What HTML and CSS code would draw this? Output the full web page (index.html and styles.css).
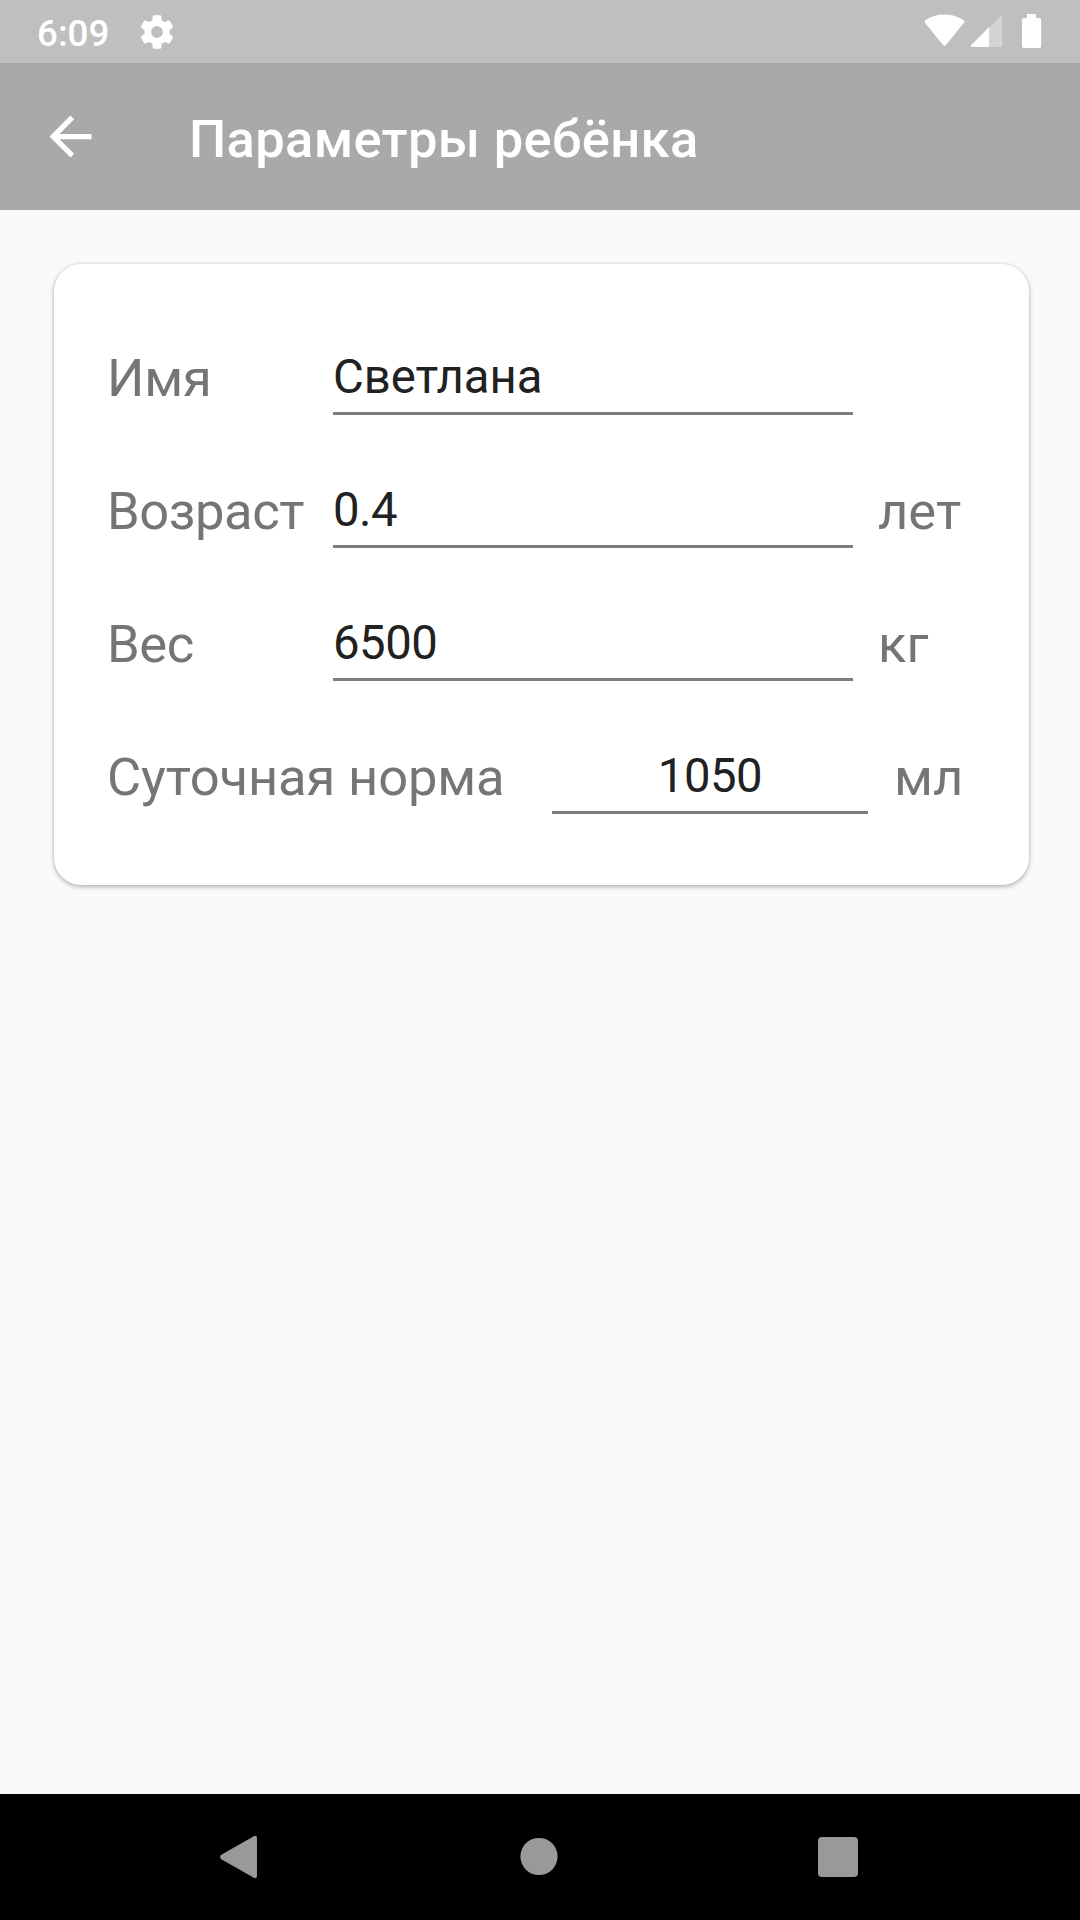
FILE: index.html
```html
<!DOCTYPE html>
<html lang="ru">
<head>
<meta charset="utf-8">
<title>Параметры ребёнка</title>
<link rel="stylesheet" href="styles.css">
</head>
<body>
<div class="screen">
  <div class="status-bar">
    <span class="clock">6:09</span>
    <svg class="gear" viewBox="0 0 24 24"><path d="M19.430 12.980c.04-.32.07-.64.07-.98s-.03-.66-.07-.98l2.110-1.650c.19-.15.24-.42.12-.64l-2-3.460c-.12-.22-.39-.3-.61-.22l-2.490 1c-.52-.4-1.080-.73-1.690-.98l-.38-2.650C14.460 2.180 14.250 2 14 2h-4c-.25 0-.46.18-.49.42l-.38 2.650c-.61.25-1.170.59-1.690.98l-2.490-1c-.23-.09-.49 0-.61.22l-2 3.460c-.13.22-.07.49.12.64l2.110 1.650c-.04.32-.07.65-.07.98s.03.66.07.98l-2.110 1.650c-.19.15-.24.42-.12.64l2 3.460c.12.22.39.3.61.22l2.490-1c.52.4 1.080.73 1.690.98l.38 2.650c.03.24.24.42.49.42h4c.25 0 .46-.18.49-.42l.38-2.650c.61-.25 1.170-.59 1.690-.98l2.490 1c.23.09.49 0 .61-.22l2-3.460c.12-.22.07-.49-.12-.64l-2.110-1.650zM12 15.500c-1.930 0-3.500-1.570-3.500-3.500s1.570-3.500 3.500-3.500 3.500 1.570 3.500 3.500-1.570 3.500-3.500 3.500z"/></svg>
    <svg class="system" viewBox="0 0 120 36">
      <path d="M1.200 9Q-.3 7.600 1.300 6.300Q9.500 0.500 20.500 0.500T39.700 6.300Q41.300 7.600 39.800 9L22.200 30.800Q20.500 32.800 18.800 30.800Z"/>
      <path class="faint" d="M65 13.500L75.800 3Q78.200 1.200 78.200 4V31Q78.200 33 76.200 33H65Z"/>
      <path d="M65 13.300V33H49Q45.500 33 47.600 30.700Z"/>
      <path d="M103 0h9v4h3.500q1.700 0 1.700 1.700V32.200q0 1.800-1.700 1.800H99.700q-1.700 0-1.700-1.800V5.700Q98 4 99.700 4H103Z"/>
    </svg>
  </div>
  <header class="app-bar">
    <svg class="back" viewBox="0 0 24 24"><path d="M20 11H7.830l5.590-5.590L12 4l-8 8 8 8 1.410-1.410L7.830 13H20v-2z"/></svg>
    <h1 class="title">Параметры ребёнка</h1>
  </header>
  <main class="content">
    <section class="card">
      <div class="row">
        <span class="label">Имя</span>
        <span class="field">Светлана</span>
      </div>
      <div class="row">
        <span class="label tight">Возраст</span>
        <span class="field number">0.4</span>
        <span class="unit">лет</span>
      </div>
      <div class="row">
        <span class="label tight">Вес</span>
        <span class="field number">6500</span>
        <span class="unit">кг</span>
      </div>
      <div class="row row-norm">
        <span class="label">Суточная норма</span>
        <span class="field number">1050</span>
        <span class="unit">мл</span>
      </div>
    </section>
  </main>
  <nav class="nav-bar">
    <svg class="nav-icon" viewBox="0 0 44 44"><path d="M3.300 24.200Q.8 22 3.300 19.800L35.800 1.200Q39 0 39 3V41Q39 44 35.800 42.800Z"/></svg>
    <svg class="nav-icon" viewBox="0 0 44 44"><circle cx="22" cy="21.500" r="18.600"/></svg>
    <svg class="nav-icon" viewBox="0 0 44 44"><rect x="2" y="2" width="40" height="40" rx="4"/></svg>
  </nav>
</div>
</body>
</html>
```
FILE: styles.css
```css
* {
  box-sizing: border-box;
}

body {
  margin: 0;
  font-family: Roboto, "Noto Sans", sans-serif;
}

.screen {
  display: flex;
  flex-direction: column;
  width: 1080px;
  height: 1920px;
  background: #fafafa;
}

.status-bar {
  display: flex;
  height: 63px;
  padding: 0 36px 0 37px;
  background: #bfbfbf;
  color: #fff;
  fill: #fff;
}

.clock {
  width: 100px;
  font-size: 36.75px;
  font-weight: 500;
  line-height: 67px;
}

.gear {
  width: 40px;
  height: 40px;
  margin-top: 12px;
}

.system {
  width: 120px;
  height: 36px;
  margin: 14px 0 0 auto;
}

.faint {
  fill: #d4d4d4;
}

.app-bar {
  display: flex;
  align-items: center;
  height: 147px;
  padding-left: 39px;
  background: #a9a9a9;
  color: #fff;
  fill: #fff;
}

.back {
  width: 63px;
  height: 63px;
  margin-bottom: 1px;
}

.title {
  margin: 0 0 0 87px;
  padding-top: 4px;
  font-size: 52.5px;
  font-weight: 500;
  letter-spacing: 0.32px;
  line-height: 64px;
}

.content {
  flex: 1;
  padding: 54px 51px 0 54px;
}

.card {
  height: 621px;
  padding: 18px 54px 0 53px;
  border-radius: 27px;
  background: #fff;
  box-shadow: 0 2px 5px rgba(0, 0, 0, 0.26), 0 0 3px rgba(0, 0, 0, 0.12);
}

.row {
  display: grid;
  grid-template-columns: 226px 520px 1fr;
  align-items: end;
  height: 133px;
}

.row-norm {
  grid-template-columns: 445px 316px 1fr;
}

.label,
.unit {
  color: #757575;
  font-size: 52.5px;
  line-height: 74px;
  white-space: nowrap;
}

.label {
  letter-spacing: -0.15px;
}

.label.tight {
  letter-spacing: -0.42px;
}

.unit {
  padding-left: 25px;
}

.row-norm .unit {
  padding-left: 26px;
}

.field {
  height: 73px;
  border-bottom: 3px solid #7c7c7c;
  color: #212121;
  font-size: 47.25px;
  line-height: 70px;
}

.number {
  letter-spacing: -0.45px;
}

.row-norm .field {
  text-align: center;
}

.nav-bar {
  display: flex;
  justify-content: center;
  align-items: center;
  gap: 255px;
  height: 126px;
  padding-right: 2px;
  background: #000;
  fill: #999;
}

.nav-icon {
  width: 44px;
  height: 44px;
}
```
